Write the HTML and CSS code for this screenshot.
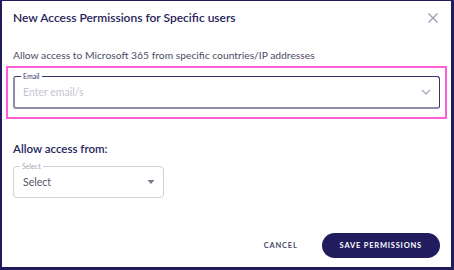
FILE: index.html
```html
<!DOCTYPE html>
<html lang="en">
<head>
    <meta charset="UTF-8">
    <meta name="viewport" content="width=device-width, initial-scale=1.0">
    <title>New Access Permissions</title>
    <link rel="stylesheet" href="styles.css">
</head>
<body>
    <div class="dialog">
        <div class="dialog-head">
            <h1>New Access Permissions for Specific users</h1>
            <button class="close" aria-label="Close">
                <svg width="10" height="10" viewBox="0 0 10 10"><path d="M0.5 0.5L9.5 9.5M9.5 0.5L0.5 9.5" stroke="#9b99b8" stroke-width="1.2" fill="none"/></svg>
            </button>
        </div>
        <p class="intro">Allow access to Microsoft 365 from specific countries/IP addresses</p>

        <div class="focus-ring">
            <div class="field email">
                <span class="field-label">Email</span>
                <span class="placeholder">Enter email/s</span>
                <svg width="10" height="6" viewBox="0 0 10 6"><path d="M1 1L5 5L9 1" stroke="#a9a8b8" stroke-width="1.3" fill="none"/></svg>
            </div>
        </div>

        <h2>Allow access from:</h2>
        <div class="field select">
            <span class="field-label">Select</span>
            <span class="value">Select</span>
            <svg width="8" height="4" viewBox="0 0 8 4"><path d="M0.5 0H7.5L4 4Z" fill="#77768a"/></svg>
        </div>

        <div class="actions">
            <button class="cancel">CANCEL</button>
            <button class="save">SAVE PERMISSIONS</button>
        </div>
    </div>
</body>
</html>
```

FILE: styles.css
```css
* {
    box-sizing: border-box;
    margin: 0;
    padding: 0;
    font-family: Lato, "Liberation Sans", sans-serif;
}

body {
    background: #fff;
}

.dialog {
    width: 454px;
    height: 270px;
    border: 1px solid #201c5c;
    border-left-width: 2px;
    border-right-width: 3px;
    border-bottom-width: 3px;
    padding: 7px 11px 0 11px;
    background: #fff;
}

.dialog-head {
    display: flex;
    justify-content: space-between;
    align-items: center;
    height: 20px;
}

h1 {
    font-size: 12px;
    font-weight: 600;
    color: #26245a;
    line-height: 20px;
}

.close {
    all: unset;
    display: flex;
    margin-right: 2px;
}

.intro {
    margin-top: 18px;
    font-size: 10.3px;
    line-height: 18px;
    color: #4c4b66;
}

.focus-ring {
    margin: 2px -7px 0 -7px;
    border: 2px solid #ff5fd6;
    padding: 8px 5px;
}

.field {
    position: relative;
    display: flex;
    align-items: center;
    justify-content: space-between;
    border-radius: 3px;
}

.field-label {
    position: absolute;
    top: -5px;
    left: 6px;
    padding: 0 2px;
    background: #fff;
    font-size: 7px;
    line-height: 9px;
}

.email {
    height: 33px;
    padding: 0 8px 0 8px;
    border: 1px solid #36346e;
    border-left: 2px solid #8f8da7;
    border-bottom: 2px solid #8f8da7;
}

.email .field-label {
    color: #36346e;
}

.placeholder {
    font-size: 10.5px;
    color: #c6c5d3;
}

h2 {
    margin-top: 21px;
    font-size: 11.5px;
    font-weight: 600;
    line-height: 18px;
    color: #26245a;
}

.select {
    margin-top: 8px;
    width: 151px;
    height: 32px;
    padding: 0 8px 0 9px;
    border: 1px solid #cfcfd8;
    border-radius: 4px;
}

.select .field-label {
    color: #a9a8b6;
}

.value {
    font-size: 10.5px;
    color: #555468;
}

.actions {
    display: flex;
    justify-content: flex-end;
    align-items: center;
    gap: 16px;
    margin-top: 35px;
}

.actions button {
    all: unset;
    font-size: 7.5px;
    font-weight: 700;
    letter-spacing: 0.8px;
}

.actions .cancel {
    padding: 0 8px;
    color: #4c4b66;
}

.actions .save {
    height: 25px;
    padding: 0 18px;
    border-radius: 13px;
    background: #201c5e;
    color: #fff;
    line-height: 25px;
}
```
